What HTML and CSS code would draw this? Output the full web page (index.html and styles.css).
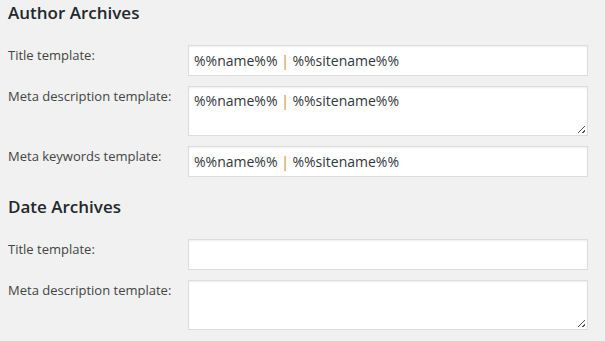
FILE: index.html
```html
<!DOCTYPE html>
<html>
<head>
<meta charset="utf-8">
<link rel="stylesheet" href="styles.css">
</head>
<body>
<section class="section">
  <h2 class="heading">Author Archives</h2>
  <div class="form">
    <label class="label">Title template:</label>
    <div class="field input">%%name%% <span class="sep">|</span> %%sitename%%</div>
    <label class="label">Meta description template:</label>
    <div class="field textarea">%%name%% <span class="sep">|</span> %%sitename%%<span class="grip"></span></div>
    <label class="label">Meta keywords template:</label>
    <div class="field input">%%name%% <span class="sep">|</span> %%sitename%%</div>
  </div>
</section>
<section class="section section-date">
  <h2 class="heading">Date Archives</h2>
  <div class="form">
    <label class="label">Title template:</label>
    <div class="field input"></div>
    <label class="label">Meta description template:</label>
    <div class="field textarea"><span class="grip"></span></div>
  </div>
</section>
</body>
</html>
```
FILE: styles.css
```css
html, body {
  margin: 0;
  padding: 0;
  background: #f1f1f1;
}
body {
  padding: 1px 8px 0;
  font-family: "Open Sans", "Liberation Sans", sans-serif;
  color: #444;
}
.heading {
  margin: 0;
  font-size: 17px;
  font-weight: 600;
  line-height: 24px;
  color: #23282d;
}
.section-date {
  margin-top: 18px;
}
.form {
  margin-top: 20px;
  display: grid;
  grid-template-columns: 180px 400px;
  row-gap: 10px;
}
.label {
  font-size: 13px;
  line-height: 18px;
  padding-top: 1px;
  color: #444;
}
.field {
  box-sizing: border-box;
  background: #fff;
  border: 1px solid #ddd;
  box-shadow: inset 0 1px 2px rgba(0,0,0,.07);
  font-size: 14px;
  color: #32373c;
  padding: 0 5px;
  white-space: pre;
}
.input {
  height: 31px;
  line-height: 29px;
}
.textarea {
  position: relative;
  height: 50px;
  line-height: 20px;
  padding-top: 4px;
}
.sep {
  color: #d0862a;
}
.grip {
  position: absolute;
  right: 2px;
  bottom: 2px;
  width: 7px;
  height: 7px;
  background:
    linear-gradient(135deg, transparent 45%, #555 45%, #555 55%, transparent 55%) ,
    linear-gradient(135deg, transparent 78%, #555 78%, #555 90%, transparent 90%);
}
```
